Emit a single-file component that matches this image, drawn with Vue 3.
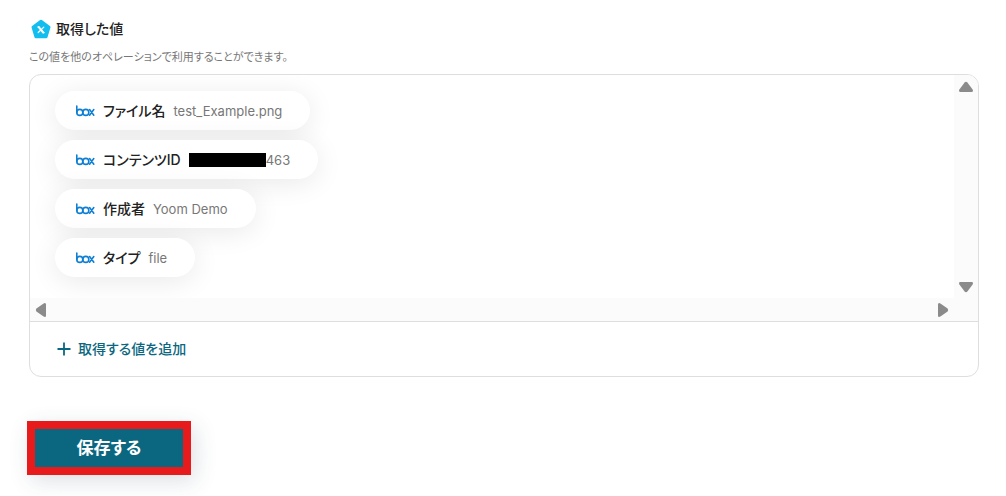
<script setup>
const values = [
  { label: 'ファイル名', value: 'test_Example.png' },
  { label: 'コンテンツID', value: '463', masked: true },
  { label: '作成者', value: 'Yoom Demo' },
  { label: 'タイプ', value: 'file' },
]
</script>

<template>
  <main class="page">
    <header class="heading">
      <svg class="badge" viewBox="0 0 22 22" aria-hidden="true">
        <path d="M11 3.2 19 9.1 16.1 18.7H5.9L3 9.1Z" fill="#13bdee" stroke="#13bdee" stroke-width="3" stroke-linejoin="round" />
        <path d="M8.8 9.1 13.2 14.5" fill="none" stroke="#fff" stroke-width="2" stroke-linecap="round" />
        <path d="M13.8 9.1 8.2 14.5M7.8 9h1.2M13 14.6h1.2" fill="none" stroke="#fff" stroke-width="1.2" stroke-linecap="round" />
      </svg>
      <h1>取得した値</h1>
    </header>
    <p class="note">この値を他のオペレーションで利用することができます。</p>

    <section class="panel">
      <div class="viewer">
        <ul class="chips">
          <li v-for="item in values" :key="item.label" class="chip">
            <svg class="box-logo" viewBox="0 0 20 12" role="img" aria-label="box">
              <g fill="none" stroke="#0f7fd3" stroke-width="1.6" stroke-linecap="round">
                <path d="M1.8 1v6.4" />
                <circle cx="4.8" cy="7.4" r="3" />
                <circle cx="10.8" cy="7.4" r="3" />
                <path d="M14.6 4.6 18.8 10.2M18.8 4.6 14.6 10.2" />
              </g>
            </svg>
            <strong>{{ item.label }}</strong>
            <span class="value"><i v-if="item.masked" class="mask"></i>{{ item.value }}</span>
          </li>
        </ul>
        <div class="vbar">
          <button type="button" aria-label="上へスクロール">
            <svg width="16" height="12" viewBox="0 0 16 12"><path d="M6.6 1.4Q8 .2 9.4 1.4L14.6 8.6Q15.8 11 13.5 11H2.5Q.2 11 1.4 8.6Z" /></svg>
          </button>
          <button type="button" aria-label="下へスクロール">
            <svg width="16" height="12" viewBox="0 0 16 12"><path d="M6.6 10.6Q8 11.8 9.4 10.6L14.6 3.4Q15.8 1 13.5 1H2.5Q.2 1 1.4 3.4Z" /></svg>
          </button>
        </div>
        <div class="hbar">
          <button type="button" aria-label="左へスクロール">
            <svg width="12" height="16" viewBox="0 0 12 16"><path d="M1.4 6.6Q.2 8 1.4 9.4L8.6 14.6Q11 15.8 11 13.5V2.5Q11 .2 8.6 1.4Z" /></svg>
          </button>
          <button type="button" aria-label="右へスクロール">
            <svg width="12" height="16" viewBox="0 0 12 16"><path d="M10.6 6.6Q11.8 8 10.6 9.4L3.4 14.6Q1 15.8 1 13.5V2.5Q1 .2 3.4 1.4Z" /></svg>
          </button>
        </div>
        <div class="corner"></div>
      </div>
      <div class="footer">
        <button type="button" class="add">
          <svg width="14" height="14" viewBox="0 0 14 14" aria-hidden="true"><path d="M7 .5v13M.5 7h13" stroke="currentColor" stroke-width="1.8" /></svg>
          取得する値を追加
        </button>
      </div>
    </section>

    <button type="button" class="save">保存する</button>
  </main>
</template>

<style>
body {
  background: #fff;
}
</style>

<style scoped>
.page {
  padding: 18px 27px 20px 29px;
  color: #222;
  font-family: Inter, "Noto Sans CJK JP", sans-serif;
  font-feature-settings: "palt";
}
button {
  padding: 0;
  border: 0;
  background: none;
  font: inherit;
  font-feature-settings: inherit;
  cursor: pointer;
}
.heading {
  display: flex;
  align-items: center;
  gap: 4px;
  height: 22px;
}
.badge {
  width: 22px;
  height: 22px;
  margin-left: 1px;
}
h1 {
  margin: 0;
  font-size: 14px;
  line-height: 22px;
  font-weight: 500;
}
.note {
  margin: 8px 0;
  color: #777;
  font-size: 11px;
  line-height: 18px;
}
.panel {
  border: 1px solid #dedede;
  border-radius: 12px;
  overflow: hidden;
}
.viewer {
  display: grid;
  grid-template-columns: 1fr 24px;
  grid-template-rows: auto 23px;
}
.chips {
  display: flex;
  flex-direction: column;
  align-items: flex-start;
  gap: 10px;
  margin: 0;
  padding: 16px 25px 21px;
  list-style: none;
  overflow: hidden;
}
.chip {
  display: flex;
  align-items: center;
  height: 39px;
  padding: 0 28px 0 20px;
  border-radius: 20px;
  background: #fff;
  box-shadow: 0 4px 28px rgba(0, 0, 0, 0.09);
}
.box-logo {
  width: 20px;
  height: 12px;
  margin-right: 8px;
}
.chip strong {
  margin-right: 8px;
  padding-bottom: 2px;
  font-size: 14px;
  font-weight: 500;
}
.value {
  display: flex;
  align-items: center;
  color: #777;
  font-size: 13px;
}
.mask {
  width: 77px;
  height: 14px;
  background: #000;
}
.vbar,
.hbar,
.corner {
  background: #fbfbfb;
}
.vbar,
.hbar {
  display: flex;
  justify-content: space-between;
}
.vbar {
  flex-direction: column;
  align-items: center;
  padding: 6px 0 5px;
}
.hbar {
  align-items: center;
  padding: 0 5px;
}
.vbar svg,
.hbar svg {
  display: block;
  fill: #8b8b8b;
}
.footer {
  padding: 16px 27px;
  border-top: 1px solid #dedede;
}
.add {
  display: flex;
  align-items: center;
  gap: 7px;
  color: #0b6780;
  font-size: 14px;
  line-height: 22px;
  font-weight: 500;
}
.save {
  min-width: 164px;
  margin: 44px 0 0 -2px;
  padding: 0 24px;
  border: 8px solid #e71b1c;
  background: #0b6780;
  color: #fff;
  font-size: 17px;
  line-height: 38px;
  font-weight: 700;
  box-shadow: 4px 6px 22px rgba(40, 60, 90, 0.16);
}
</style>
